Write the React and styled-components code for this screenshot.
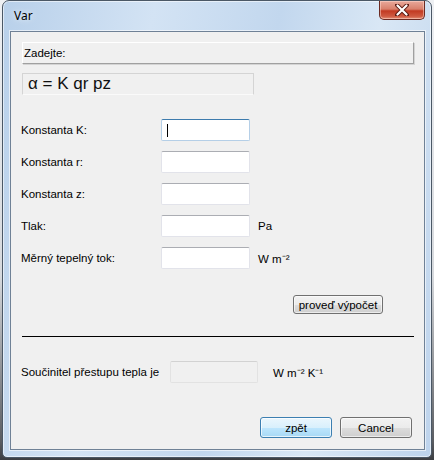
import React from "react";
import styled, { createGlobalStyle } from "styled-components";

const Global = createGlobalStyle`
  html, body { margin: 0; padding: 0; }
  body {
    width: 434px;
    height: 460px;
    overflow: hidden;
    background: linear-gradient(to bottom, #eef0f3 0%, #d6d9dd 60%, #5a5d62 96%, #3c3e42 100%);
    font-family: "Liberation Sans", Arial, sans-serif;
  }
`;

const Window = styled.div`
  box-sizing: border-box;
  margin-left: 2px;
  width: 430px;
  height: 458px;
  border: 1px solid #4b5866;
  border-radius: 7px 7px 5px 5px;
  background: linear-gradient(100deg, #b8d0ea 0%, #d3e3f4 30%, #c2d7ee 55%, #d9e7f5 75%, #bdd3ec 100%);
  box-shadow: inset 0 0 0 1px rgba(255, 255, 255, 0.55);
  display: flex;
  flex-direction: column;
  padding: 0 6px 7px 7px;
`;

const TitleBar = styled.div`
  height: 30px;
  display: flex;
  align-items: flex-start;
  flex-shrink: 0;
`;

const Title = styled.div`
  font-family: "Noto Sans", "Open Sans", sans-serif;
  font-size: 12px;
  color: #000;
  margin: 6px 0 0 4px;
  text-shadow: 0 0 6px rgba(255, 255, 255, 0.9);
`;

const CloseButton = styled.div`
  margin-left: auto;
  margin-right: 0;
  width: 46px;
  height: 19px;
  box-sizing: border-box;
  border: 1px solid #6b2a22;
  border-top: none;
  border-radius: 0 0 5px 5px;
  background: linear-gradient(to bottom, #e9a99b 0%, #d9806c 45%, #c23a22 55%, #cf5a41 85%, #e39077 100%);
  box-shadow: inset 0 0 0 1px rgba(255, 220, 210, 0.5);
  display: flex;
  align-items: center;
  justify-content: center;
`;

const Client = styled.div`
  flex: 1;
  display: flex;
  flex-direction: column;
  background: #f0f0f0;
  border: 1px solid #6f8196;
  box-shadow: 0 0 0 1px rgba(255, 255, 255, 0.6);
  padding: 10px 10px 0 11px;
  font-size: 11.5px;
  color: #000;
`;

const HeaderBar = styled.div`
  height: 22px;
  box-sizing: border-box;
  border-top: 1px solid #ffffff;
  border-left: 1px solid #ffffff;
  border-bottom: 1px solid #a0a0a0;
  border-right: 1px solid #a0a0a0;
  box-shadow: 1px 1px 0 #d4d4d4;
  display: flex;
  align-items: center;
  padding-left: 1px;
`;

const FormulaBox = styled.div`
  margin-top: 9px;
  width: 232px;
  height: 22px;
  box-sizing: border-box;
  border-top: 1px solid #d4d4d4;
  border-left: 1px solid #d4d4d4;
  border-bottom: 1px solid #fafafa;
  border-right: 1px solid #d4d4d4;
  display: flex;
  align-items: center;
  padding-left: 5px;
  font-size: 17px;
  color: #111;
`;

const Rows = styled.div`
  margin-top: 24px;
  display: flex;
  flex-direction: column;
  gap: 10px;
`;

const Row = styled.div`
  display: flex;
  align-items: center;
  height: 22px;
`;

const Label = styled.div`
  width: ${(p) => p.$w}px;
  margin-left: -1px;
  flex-shrink: 0;
`;

const Field = styled.div`
  width: ${(p) => p.$w || 89}px;
  height: 22px;
  box-sizing: border-box;
  background: ${(p) => (p.$disabled ? "#f0f0f0" : "#ffffff")};
  border: 1px solid ${(p) => (p.$focus ? "#b5cfe7" : p.$disabled ? "#e2e2e2" : "#e2e3ea")};
  border-top-color: ${(p) => (p.$focus ? "#3d7bad" : p.$disabled ? "#d2d2d2" : "#abadb3")};
  border-radius: 2px;
  display: flex;
  align-items: center;
  padding-left: 5px;
  flex-shrink: 0;
`;

const Caret = styled.span`
  width: 1px;
  height: 13px;
  background: #000;
`;

const Unit = styled.div`
  margin-left: ${(p) => p.$gap}px;
`;

const ComputeRow = styled.div`
  margin-top: 26px;
  display: flex;
  justify-content: flex-end;
  padding-right: 31px;
`;

const Button = styled.div`
  box-sizing: border-box;
  width: ${(p) => p.$w}px;
  height: ${(p) => p.$h}px;
  border: 1px solid ${(p) => (p.$default ? "#3c7fb1" : "#707070")};
  border-radius: 3px;
  background: ${(p) =>
    p.$default
      ? "linear-gradient(to bottom, #eaf6fd 0%, #d9f0fc 50%, #bee6fd 51%, #a7d9f5 100%)"
      : "linear-gradient(to bottom, #f2f2f2 0%, #ebebeb 50%, #dddddd 51%, #cfcfcf 100%)"};
  box-shadow: inset 0 0 0 1px ${(p) => (p.$default ? "rgba(255,255,255,0.7)" : "rgba(255,255,255,0.6)")};
  display: flex;
  align-items: center;
  justify-content: center;
  font-size: 11.5px;
`;

const Divider = styled.div`
  margin-top: 22px;
  height: 1px;
  background: #000;
`;

const ResultRow = styled(Row)`
  margin-top: 24px;
`;

const Actions = styled.div`
  margin-top: 34px;
  display: flex;
  justify-content: flex-end;
  gap: 8px;
  padding-right: 2px;
`;

const fields = [
  { label: "Konstanta K:", focus: true },
  { label: "Konstanta r:" },
  { label: "Konstanta z:" },
  { label: "Tlak:", unit: "Pa" },
  { label: "Měrný tepelný tok:", unit: "W m⁻²" },
];

export default function App() {
  return (
    <>
      <Global />
      <Window>
        <TitleBar>
          <Title>Var</Title>
          <CloseButton>
            <svg width="14" height="12" viewBox="0 0 14 12">
              <path
                d="M2 1 L12 11 M12 1 L2 11"
                stroke="#5a1a12"
                strokeWidth="4"
                strokeLinecap="round"
              />
              <path
                d="M2.5 1.5 L11.5 10.5 M11.5 1.5 L2.5 10.5"
                stroke="#ffffff"
                strokeWidth="2.2"
                strokeLinecap="round"
              />
            </svg>
          </CloseButton>
        </TitleBar>
        <Client>
          <HeaderBar>Zadejte:</HeaderBar>
          <FormulaBox>α = K qr pz</FormulaBox>
          <Rows>
            {fields.map((f) => (
              <Row key={f.label}>
                <Label $w={140}>{f.label}</Label>
                <Field $focus={f.focus}>{f.focus && <Caret />}</Field>
                {f.unit && <Unit $gap={8}>{f.unit}</Unit>}
              </Row>
            ))}
          </Rows>
          <ComputeRow>
            <Button $w={90} $h={19}>proveď výpočet</Button>
          </ComputeRow>
          <Divider />
          <ResultRow>
            <Label $w={149}>Součinitel přestupu tepla je</Label>
            <Field $w={88} $disabled />
            <Unit $gap={15}>W m⁻² K⁻¹</Unit>
          </ResultRow>
          <Actions>
            <Button $w={72} $h={21} $default>zpět</Button>
            <Button $w={72} $h={21}>Cancel</Button>
          </Actions>
        </Client>
      </Window>
    </>
  );
}
